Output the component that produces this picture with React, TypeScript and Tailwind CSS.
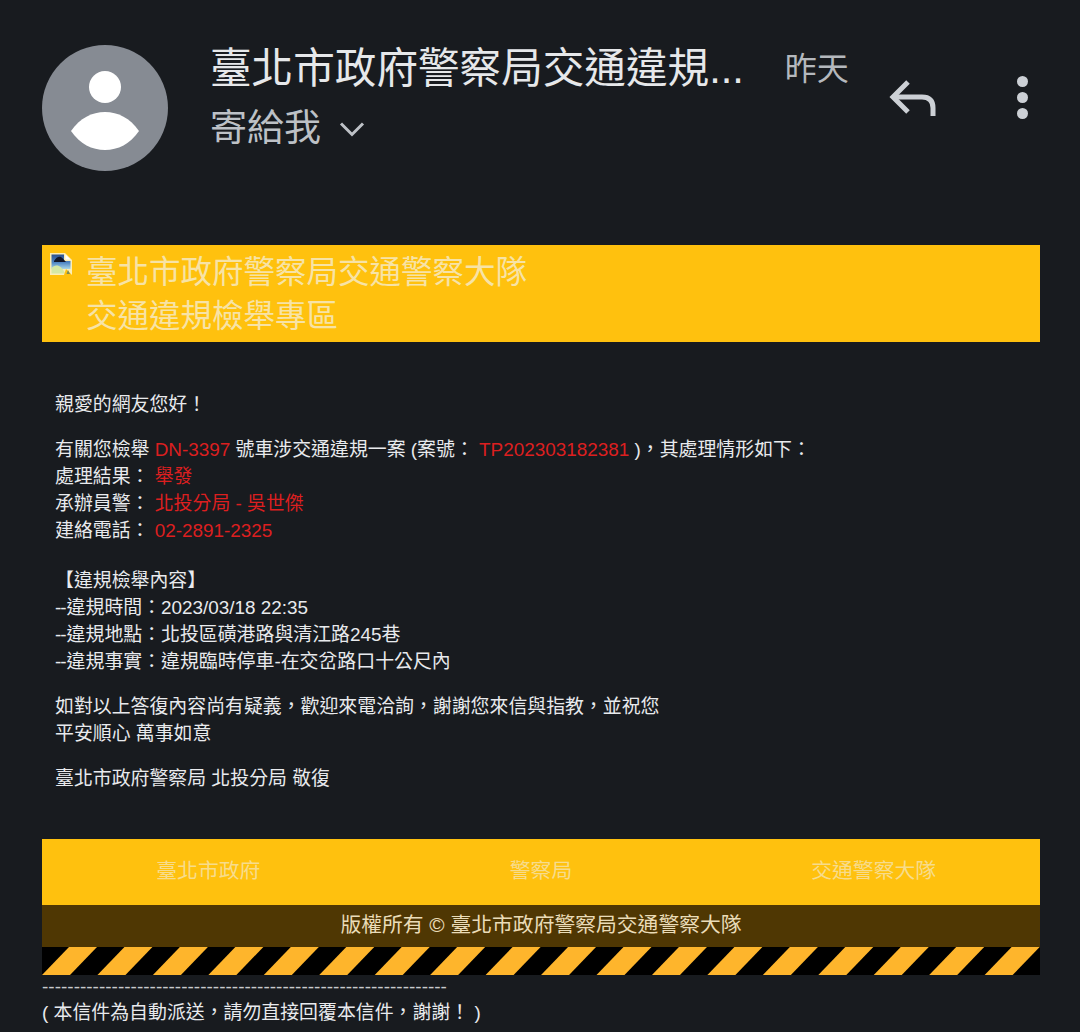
const font = "font-['Liberation_Sans','Noto_Sans_CJK_TC',sans-serif]";

function Avatar() {
  return (
    <svg width="126" height="126" viewBox="0 0 126 126" className="shrink-0">
      <circle cx="63" cy="63" r="63" fill="#868b93" />
      <circle cx="63" cy="42" r="16" fill="#ffffff" />
      <path d="M29 86 C38 73 50 67 63 67 C76 67 88 73 97 86 C88 99 76 105 63 105 C50 105 38 99 29 86 Z" fill="#ffffff" />
    </svg>
  );
}

function BrokenImage() {
  return (
    <svg width="22" height="22" viewBox="0 0 22 22" className="absolute left-[8px] top-[8px]">
      <defs>
        <linearGradient id="sky" x1="0" y1="0" x2="0" y2="1">
          <stop offset="0" stopColor="#2b4f8c" />
          <stop offset="0.55" stopColor="#4f86c4" />
          <stop offset="1" stopColor="#a9d6e6" />
        </linearGradient>
      </defs>
      <path d="M0 0 H15 L22 7 V22 H0 Z" fill="#fbeeb8" />
      <path d="M1.5 1.5 H14 V8 H20.5 V16 H1.5 Z" fill="url(#sky)" />
      <path d="M4 8 C6 4 9 3 11 4 C13 5 14 7 16 9 H4 Z" fill="#12172a" />
      <path d="M1.5 20.5 V15 C5 11 11 11 15 20.5 Z" fill="#d5e8a4" />
      <path d="M15.5 1.5 L20.5 6.5 H15.5 Z" fill="#ffffff" />
      <path d="M16 16 L22 22 H14 Z" fill="#ffc10e" />
      <path d="M18 17 L20 21 H16.5 Z" fill="#7a8a5a" />
    </svg>
  );
}

function Stripes() {
  return (
    <svg className="block w-full h-[28px]" viewBox="0 0 998 28" preserveAspectRatio="none">
      <rect width="998" height="28" fill="#000000" />
      {Array.from({ length: 19 }).map((_, i) => {
        const x = i * 55.45;
        return <polygon key={i} points={`${x},28 ${x + 28},28 ${x + 55},0 ${x + 27},0`} fill="#feb52c" />;
      })}
    </svg>
  );
}

function Header() {
  return (
    <div className="flex items-start h-[200px] pl-[42px] pt-[45px]">
      <Avatar />
      <div className="ml-[42px] w-[654px] shrink-0">
        <div className="flex items-center h-[48px]">
          <span className="text-[41.6px] leading-[48px] text-[#e6e8ea] whitespace-nowrap">臺北市政府警察局交通違規...</span>
          <span className="ml-[41px] text-[32px] leading-[48px] text-[#b4b8bd] whitespace-nowrap">昨天</span>
        </div>
        <div className="flex items-center mt-[14px] h-[44px]">
          <span className="text-[37px] leading-[44px] text-[#bdc1c6]">寄給我</span>
          <svg width="28" height="28" viewBox="0 0 28 28" fill="none" stroke="#bdc1c6" strokeWidth="3" className="ml-[17px]">
            <path d="M3 8.5 L14 19.5 L25 8.5" />
          </svg>
        </div>
      </div>
      <svg width="50" height="40" viewBox="0 0 50 40" fill="none" stroke="#ccd0d5" strokeWidth="5" className="ml-[24px] mt-[33px] shrink-0">
        <path d="M20 4 L5 19 L20 34" />
        <path d="M5 19 H34 Q45 19 45 30 V38" />
      </svg>
      <div className="ml-[79px] mt-[31px] flex flex-col gap-[5px]">
        <div className="w-[11px] h-[11px] rounded-full bg-[#ccd0d5]" />
        <div className="w-[11px] h-[11px] rounded-full bg-[#ccd0d5]" />
        <div className="w-[11px] h-[11px] rounded-full bg-[#ccd0d5]" />
      </div>
    </div>
  );
}

function Red({ children }: { children: React.ReactNode }) {
  return <span className="text-[#dc1f1f]">{children}</span>;
}

function Dash() {
  return <span className="tracking-[-1px] mr-[1px]">--</span>;
}

export default function App() {
  return (
    <div className={`${font} w-[1080px] h-[1032px] overflow-hidden bg-[#181b1f]`}>
      <Header />
      <div className="mx-[42px] w-[998px] mt-[45px]">
        <div className="relative h-[97px] bg-[#ffc10e] pl-[44px] pt-[5px] text-[31.5px] leading-[44px] text-[#f7e3a6]">
          <BrokenImage />
          <div>臺北市政府警察局交通警察大隊</div>
          <div>交通違規檢舉專區</div>
        </div>

        <div className="px-[13px] pt-[49px] text-[18.9px] leading-[27px] text-[#e8eaed]">
          <p>親愛的網友您好！</p>
          <p className="mt-[18px]">
            有關您檢舉 <Red>DN-3397</Red> 號車涉交通違規一案 (案號： <Red>TP202303182381</Red> )，其處理情形如下：
          </p>
          <p>處理結果： <Red>舉發</Red></p>
          <p>承辦員警： <Red>北投分局 - 吳世傑</Red></p>
          <p>建絡電話： <Red>02-2891-2325</Red></p>
          <p className="mt-[23px]">【違規檢舉內容】</p>
          <p><Dash />違規時間：2023/03/18 22:35</p>
          <p><Dash />違規地點：北投區磺港路與清江路245巷</p>
          <p><Dash />違規事實：違規臨時停車-在交岔路口十公尺內</p>
          <p className="mt-[18px]">如對以上答復內容尚有疑義，歡迎來電洽詢，謝謝您來信與指教，並祝您</p>
          <p>平安順心 萬事如意</p>
          <p className="mt-[18px]">臺北市政府警察局 北投分局 敬復</p>
        </div>

        <div className="mt-[47px]">
          <div className="grid grid-cols-3 h-[66px] pb-[2px] items-center bg-[#ffc10e] text-center text-[20.8px] text-[#f7dc8c]">
            <span>臺北市政府</span>
            <span>警察局</span>
            <span>交通警察大隊</span>
          </div>
          <div className="h-[42px] bg-[#4f3703] text-center text-[20.8px] leading-[40px] text-[#eadcb8]">
            版權所有 © 臺北市政府警察局交通警察大隊
          </div>
          <Stripes />
        </div>

        <p className="h-[24px] overflow-hidden text-[19px] leading-[24px] text-[#c8cacd] whitespace-nowrap">----------------------------------------------------------------</p>
        <p className="text-[18.9px] leading-[27px] text-[#e8eaed]">( 本信件為自動派送，請勿直接回覆本信件，謝謝！ )</p>
      </div>
    </div>
  );
}
